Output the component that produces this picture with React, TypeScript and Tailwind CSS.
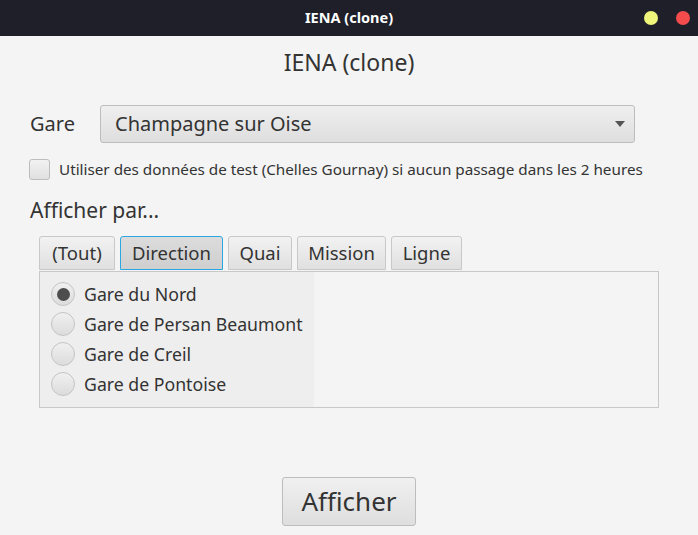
import React from "react";

const font = { fontFamily: '"Noto Sans", "Open Sans", sans-serif' };

function Radio({ checked, label }: { checked?: boolean; label: string }) {
  return (
    <div className="flex items-center h-[30px]">
      <div className="w-[24px] h-[24px] rounded-full border border-[#c4c4c4] bg-gradient-to-b from-[#f0f0f0] to-[#dcdcdc] flex items-center justify-center ml-[11px]">
        {checked && <div className="w-[13px] h-[13px] rounded-full bg-[#4d4d4d]" />}
      </div>
      <span className="ml-[9px] text-[17.7px] text-[#333333]">{label}</span>
    </div>
  );
}

function Tab({ label, w, selected }: { label: string; w: string; selected?: boolean }) {
  return (
    <div
      className={
        "h-[34px] flex items-center justify-center rounded-t-[3px] text-[18.5px] text-[#333333] " +
        w +
        (selected
          ? " border border-[#2aa7e0] bg-gradient-to-b from-[#dcdcdc] to-[#cfcfcf]"
          : " border border-[#c8c8c8] bg-gradient-to-b from-[#f2f2f2] to-[#e0e0e0]")
      }
    >
      {label}
    </div>
  );
}

export default function App() {
  return (
    <div className="w-[698px] h-[535px] bg-[#f4f4f4] flex flex-col overflow-hidden" style={font}>
      <div className="h-[36px] bg-[#1e1f29] flex items-center relative shrink-0">
        <div className="flex-1 text-center text-white font-bold text-[14.5px]">IENA (clone)</div>
        <div className="absolute left-[644px] top-[11px] w-[14px] h-[14px] rounded-full bg-[#eef57a]" />
        <div className="absolute left-[676px] top-[11px] w-[14px] h-[14px] rounded-full bg-[#f44c4c]" />
      </div>
      <div className="text-center text-[23px] text-[#333333] leading-[30px] mt-[11px]">IENA (clone)</div>
      <div className="flex items-center mt-[28px] ml-[30px]">
        <span className="text-[20px] text-[#333333] w-[70px]">Gare</span>
        <div className="w-[535px] h-[38px] border border-[#bdbdbd] rounded-[3px] bg-gradient-to-b from-[#efefef] to-[#dedede] flex items-center pl-[14px] pr-[9px]">
          <span className="flex-1 text-[20px] text-[#333333]">Champagne sur Oise</span>
          <svg width="10" height="6" viewBox="0 0 10 6">
            <path d="M0 0 L10 0 L5 6 Z" fill="#555555" />
          </svg>
        </div>
      </div>
      <div className="flex items-center mt-[16px] ml-[29px] h-[21px]">
        <div className="w-[21px] h-[21px] border border-[#bdbdbd] rounded-[3px] bg-gradient-to-b from-[#f2f2f2] to-[#e0e0e0]" />
        <span className="ml-[9px] text-[15.25px] text-[#333333] whitespace-nowrap">
          Utiliser des données de test (Chelles Gournay) si aucun passage dans les 2 heures
        </span>
      </div>
      <div className="mt-[16px] ml-[30px] text-[21px] leading-[28px] text-[#333333]">Afficher par...</div>
      <div className="ml-[39px] mt-[12px] w-[620px]">
        <div className="flex gap-[5px]">
          <Tab label="(Tout)" w="w-[76px]" />
          <Tab label="Direction" w="w-[103px]" selected />
          <Tab label="Quai" w="w-[64px]" />
          <Tab label="Mission" w="w-[89px]" />
          <Tab label="Ligne" w="w-[71px]" />
        </div>
        <div className="mt-px h-[137px] border border-[#c8c8c8] flex">
          <div className="w-[274px] bg-[#eeeeee] pt-[7px]">
            <Radio checked label="Gare du Nord" />
            <Radio label="Gare de Persan Beaumont" />
            <Radio label="Gare de Creil" />
            <Radio label="Gare de Pontoise" />
          </div>
        </div>
      </div>
      <div className="flex justify-center mt-[69px]">
        <div className="w-[134px] h-[49px] border border-[#bdbdbd] rounded-[3px] bg-gradient-to-b from-[#f0f0f0] to-[#dedede] flex items-center justify-center text-[26px] text-[#333333]">
          Afficher
        </div>
      </div>
    </div>
  );
}
